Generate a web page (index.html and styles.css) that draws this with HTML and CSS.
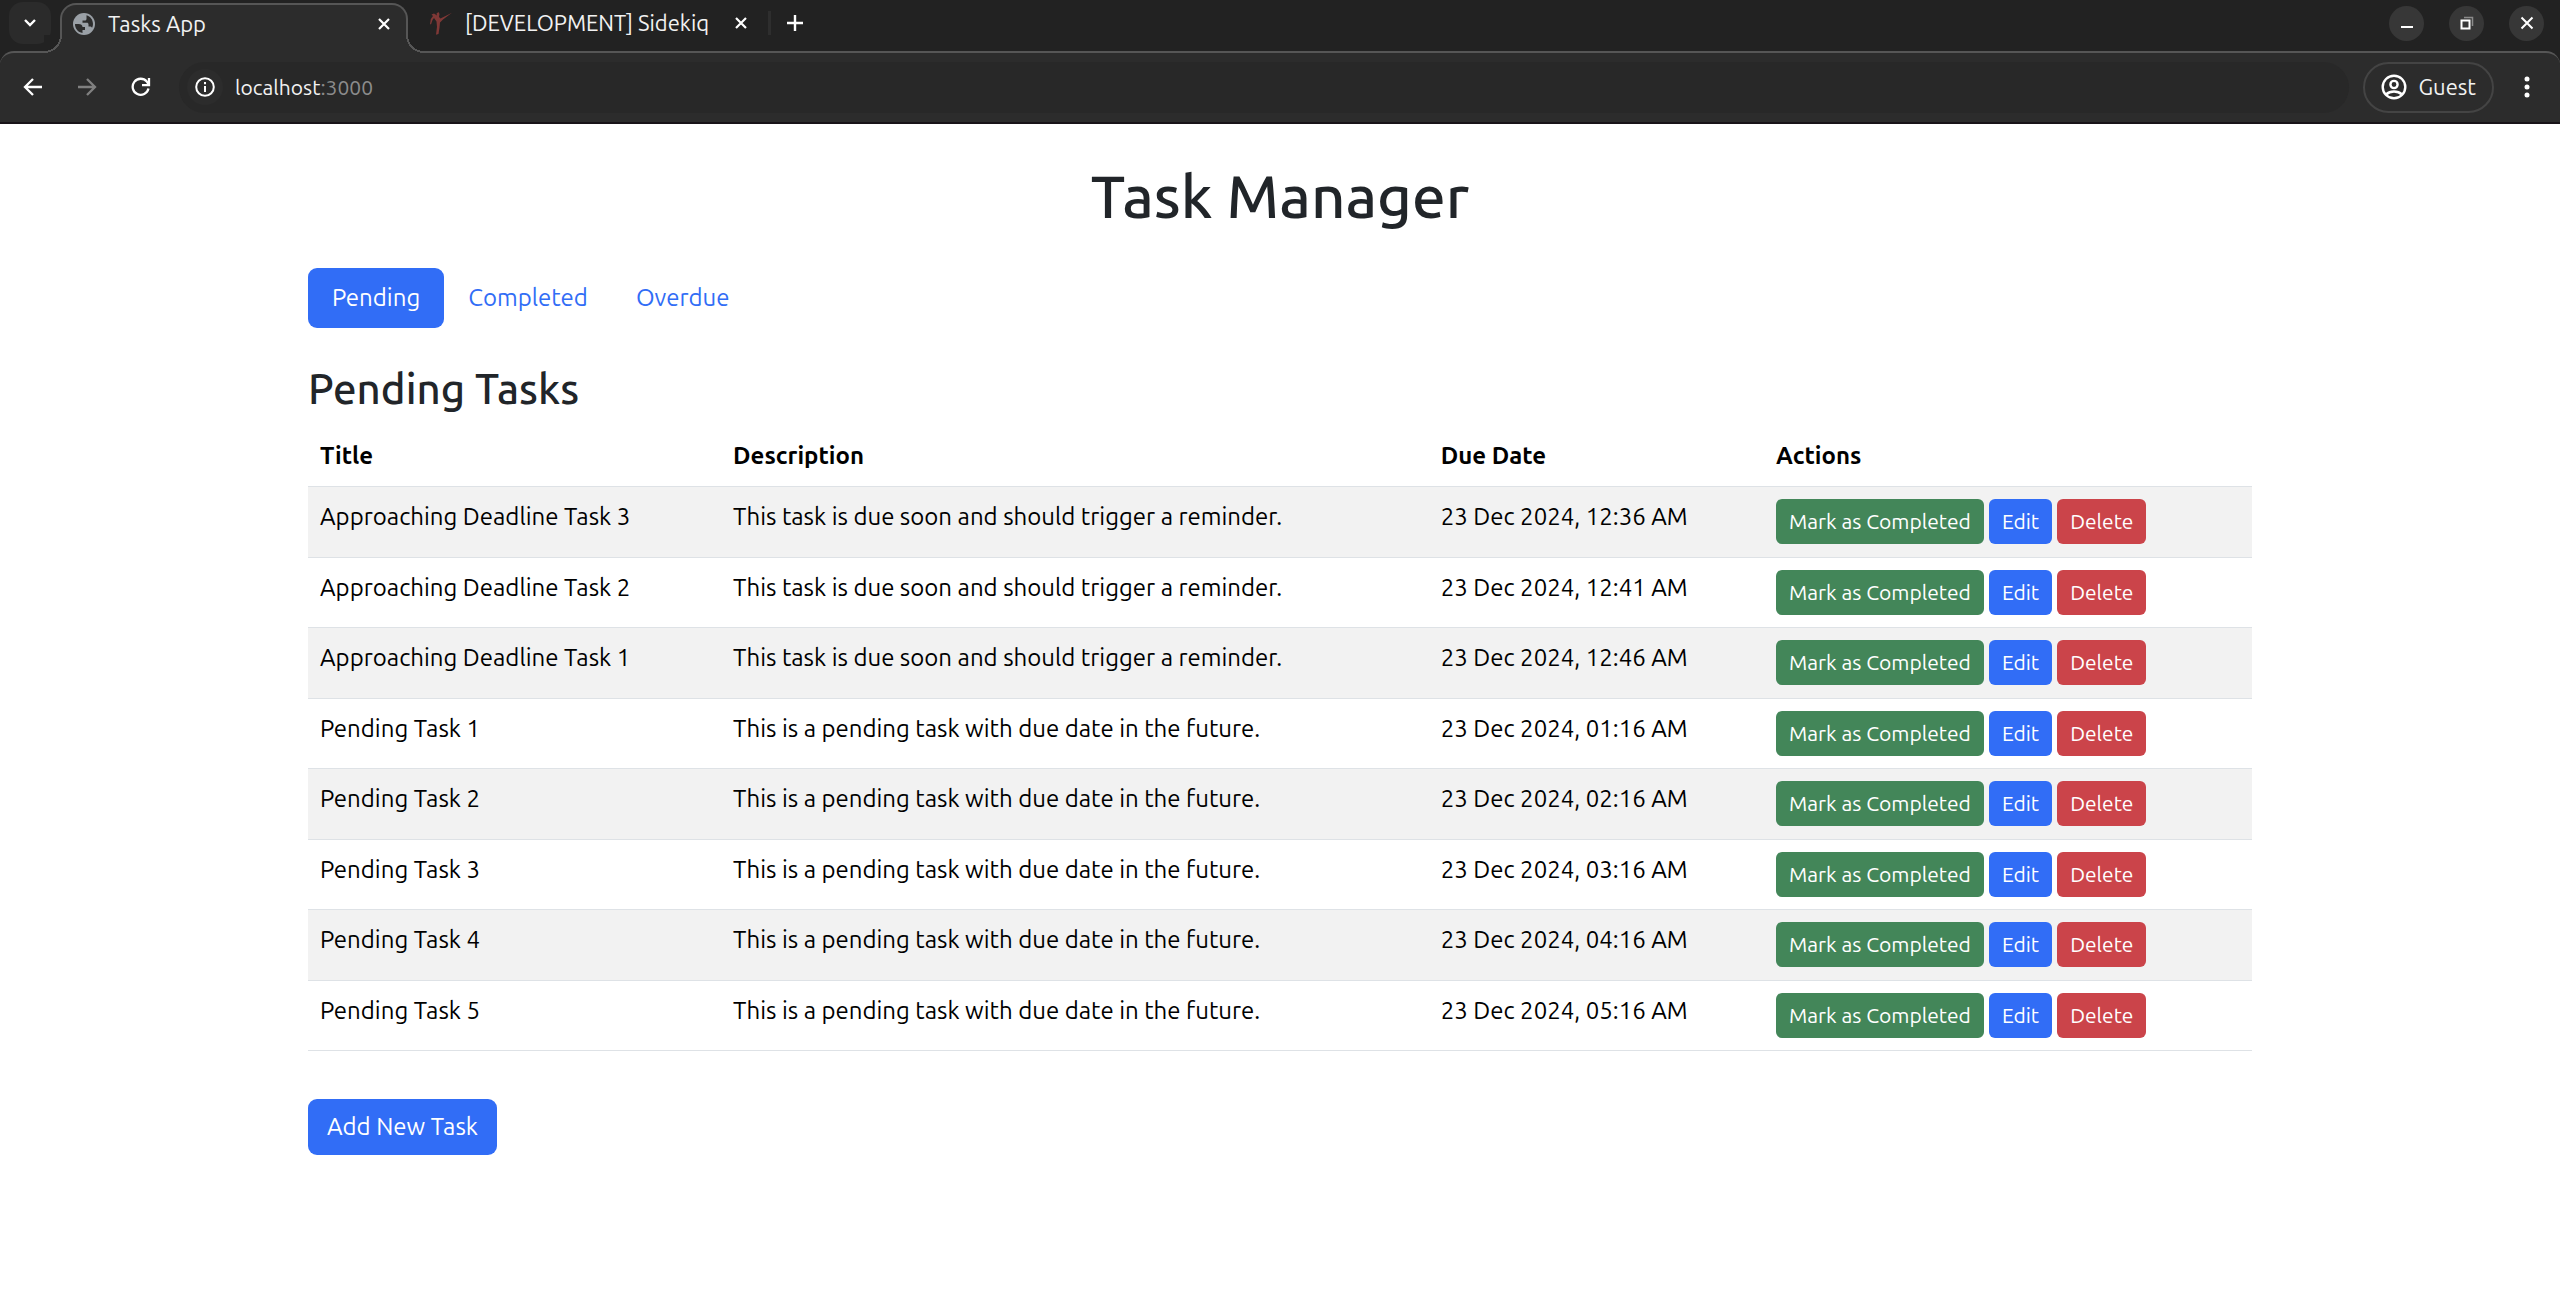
FILE: index.html
```html
<!DOCTYPE html>
<html lang="en">
<head>
<meta charset="utf-8">
<meta name="viewport" content="width=device-width, initial-scale=1">
<title>Tasks App</title>
<link rel="stylesheet" href="styles.css">
</head>
<body>
<header class="browser">
  <div class="tab-strip">
    <button class="tab-search" type="button" aria-label="Search tabs">
      <svg width="16" height="10" viewBox="0 0 16 10"><path d="M3 2l5 5 5-5" fill="none" stroke="#fff" stroke-width="2.4"/></svg>
    </button>
    <div class="tab tab-active">
      <svg class="favicon" width="22" height="22" viewBox="0 0 22 22"><circle cx="11" cy="11" r="11" fill="#9aa0a6"/><path d="M2 11h3.500c2.500 0 4 1 4 3h2.500v3H9.500v2.900C5.200 19.500 1.900 15.700 2 11zM13.500 2.300C17.300 3.300 20 6.800 20 11c0 1.500-.3 2.600-.9 3.700-.6-.7-1.300-1.200-2.300-1.200h-1.300v-2.300c0-.8-.7-1.500-1.500-1.500H9.500V7.500H12c.8 0 1.500-.7 1.500-1.500z" fill="#2c2c2c"/></svg>
      <span class="tab-title">Tasks App</span>
      <button class="icon-button" type="button" aria-label="Close tab">
        <svg width="14" height="14" viewBox="0 0 14 14"><path d="M2 2l10 10M12 2L2 12" stroke="#fff" stroke-width="2.2"/></svg>
      </button>
    </div>
    <div class="tab">
      <svg class="favicon" width="22" height="24" viewBox="0 0 22 24"><path d="M1.500 3.500L4 2.500l3 2-.5-2L8.500 1l1 2-.5 3 1.500 1.500L22 1.800 13 8.500l-3 3-.5 5-1 6.500-2.500.8 1-8-.5-5.300L4 7 2.500 9 1 13.500 0 13l.8-5L3 5z" fill="#7f3836"/></svg>
      <span class="tab-title">[DEVELOPMENT] Sidekiq</span>
      <button class="icon-button" type="button" aria-label="Close tab">
        <svg width="14" height="14" viewBox="0 0 14 14"><path d="M2 2l10 10M12 2L2 12" stroke="#fff" stroke-width="2.2"/></svg>
      </button>
    </div>
    <span class="tab-divider"></span>
    <button class="icon-button" type="button" aria-label="New tab">
      <svg width="16" height="16" viewBox="0 0 16 16"><path d="M8 0v16M0 8h16" stroke="#fff" stroke-width="2.4"/></svg>
    </button>
    <div class="window-controls">
      <button type="button" aria-label="Minimize"><svg width="14" height="14" viewBox="0 0 14 14"><path d="M1 11h12" stroke="#fff" stroke-width="2"/></svg></button>
      <button type="button" aria-label="Restore"><svg width="14" height="14" viewBox="0 0 14 14"><path d="M4 1.500h8.500V10" fill="none" stroke="#8a8a8a" stroke-width="1.500"/><rect x="1.500" y="4.500" width="8" height="8" fill="none" stroke="#fff" stroke-width="2"/></svg></button>
      <button type="button" aria-label="Close"><svg width="14" height="14" viewBox="0 0 14 14"><path d="M1.500 1.500l11 11M12.500 1.500l-11 11" stroke="#fff" stroke-width="2"/></svg></button>
    </div>
  </div>
  <div class="toolbar">
    <button class="icon-button" type="button" aria-label="Back">
      <svg width="20" height="20" viewBox="0 0 20 20"><path d="M10 2L2 10l8 8M2 10h17" fill="none" stroke="#fff" stroke-width="2.300"/></svg>
    </button>
    <button class="icon-button" type="button" aria-label="Forward" disabled>
      <svg width="20" height="20" viewBox="0 0 20 20"><path d="M10 2l8 8-8 8M18 10H1" fill="none" stroke="#808080" stroke-width="2.300"/></svg>
    </button>
    <button class="icon-button" type="button" aria-label="Reload">
      <svg width="20" height="20" viewBox="0 0 20 20"><path d="M17.500 11.500A8 8 0 1 1 15.800 4.600L17.500 7" fill="none" stroke="#fff" stroke-width="2.300"/><path d="M18 1v7.200h-7" fill="none" stroke="#fff" stroke-width="2.300"/></svg>
    </button>
    <div class="address-bar">
      <button class="site-info" type="button" aria-label="Site information">
        <svg width="20" height="20" viewBox="0 0 20 20"><circle cx="10" cy="10" r="8.800" fill="none" stroke="#fff" stroke-width="2"/><path d="M10 9v6M10 5v2.200" stroke="#fff" stroke-width="2"/></svg>
      </button>
      <span class="url">localhost<span class="url-port">:3000</span></span>
    </div>
    <button class="profile" type="button">
      <svg width="26" height="26" viewBox="0 0 26 26" fill="none" stroke="#fff" stroke-width="2.400"><circle cx="13" cy="13" r="11.300"/><circle cx="13" cy="10.500" r="3.600"/><path d="M5 20.500c2.200-2 5-3 8-3s5.800 1 8 3"/></svg>
      Guest
    </button>
    <button class="icon-button" type="button" aria-label="Menu">
      <svg width="6" height="22" viewBox="0 0 6 22" fill="#fff"><circle cx="3" cy="3" r="2.500"/><circle cx="3" cy="11" r="2.500"/><circle cx="3" cy="19" r="2.500"/></svg>
    </button>
  </div>
</header>
<main class="container">
  <h1>Task Manager</h1>
  <nav class="pills">
    <a class="pill pill-active" href="#pending">Pending</a>
    <a class="pill" href="#completed">Completed</a>
    <a class="pill" href="#overdue">Overdue</a>
  </nav>
  <h2 id="pending">Pending Tasks</h2>
  <table class="tasks">
    <colgroup><col class="col-title"><col class="col-description"><col class="col-due"><col class="col-actions"></colgroup>
    <thead>
      <tr><th scope="col">Title</th><th scope="col">Description</th><th scope="col">Due Date</th><th scope="col">Actions</th></tr>
    </thead>
    <tbody>
      <tr><td>Approaching Deadline Task 3</td><td>This task is due soon and should trigger a reminder.</td><td>23 Dec 2024, 12:36 AM</td><td><div class="actions"><button class="btn btn-sm btn-success" type="button">Mark as Completed</button><a class="btn btn-sm" href="#edit">Edit</a><button class="btn btn-sm btn-danger" type="button">Delete</button></div></td></tr>
      <tr><td>Approaching Deadline Task 2</td><td>This task is due soon and should trigger a reminder.</td><td>23 Dec 2024, 12:41 AM</td><td><div class="actions"><button class="btn btn-sm btn-success" type="button">Mark as Completed</button><a class="btn btn-sm" href="#edit">Edit</a><button class="btn btn-sm btn-danger" type="button">Delete</button></div></td></tr>
      <tr><td>Approaching Deadline Task 1</td><td>This task is due soon and should trigger a reminder.</td><td>23 Dec 2024, 12:46 AM</td><td><div class="actions"><button class="btn btn-sm btn-success" type="button">Mark as Completed</button><a class="btn btn-sm" href="#edit">Edit</a><button class="btn btn-sm btn-danger" type="button">Delete</button></div></td></tr>
      <tr><td>Pending Task 1</td><td>This is a pending task with due date in the future.</td><td>23 Dec 2024, 01:16 AM</td><td><div class="actions"><button class="btn btn-sm btn-success" type="button">Mark as Completed</button><a class="btn btn-sm" href="#edit">Edit</a><button class="btn btn-sm btn-danger" type="button">Delete</button></div></td></tr>
      <tr><td>Pending Task 2</td><td>This is a pending task with due date in the future.</td><td>23 Dec 2024, 02:16 AM</td><td><div class="actions"><button class="btn btn-sm btn-success" type="button">Mark as Completed</button><a class="btn btn-sm" href="#edit">Edit</a><button class="btn btn-sm btn-danger" type="button">Delete</button></div></td></tr>
      <tr><td>Pending Task 3</td><td>This is a pending task with due date in the future.</td><td>23 Dec 2024, 03:16 AM</td><td><div class="actions"><button class="btn btn-sm btn-success" type="button">Mark as Completed</button><a class="btn btn-sm" href="#edit">Edit</a><button class="btn btn-sm btn-danger" type="button">Delete</button></div></td></tr>
      <tr><td>Pending Task 4</td><td>This is a pending task with due date in the future.</td><td>23 Dec 2024, 04:16 AM</td><td><div class="actions"><button class="btn btn-sm btn-success" type="button">Mark as Completed</button><a class="btn btn-sm" href="#edit">Edit</a><button class="btn btn-sm btn-danger" type="button">Delete</button></div></td></tr>
      <tr><td>Pending Task 5</td><td>This is a pending task with due date in the future.</td><td>23 Dec 2024, 05:16 AM</td><td><div class="actions"><button class="btn btn-sm btn-success" type="button">Mark as Completed</button><a class="btn btn-sm" href="#edit">Edit</a><button class="btn btn-sm btn-danger" type="button">Delete</button></div></td></tr>
    </tbody>
  </table>
  <a class="btn" href="#new">Add New Task</a>
</main>
</body>
</html>
```
FILE: styles.css
```css
:root {
  --strip: #222222;
  --toolbar: #2c2c2c;
  --outline: #565656;
  --primary: #316df6;
}

* { box-sizing: border-box; }

body {
  margin: 0;
  background: #fff;
  color: #212529;
  font: 400 24px/36px Ubuntu, "Noto Sans", sans-serif;
}

button { font: inherit; color: inherit; }
svg { display: block; flex: none; }

/* Browser window */
.browser {
  background: var(--strip);
  color: #f2f2f2;
  font-size: 22px;
  line-height: 32px;
  border-bottom: 2px solid #191419;
}

.tab-strip {
  display: flex;
  align-items: center;
  height: 51px;
  padding: 0 16px 5px 9px;
}

.tab-search {
  display: grid;
  place-items: center;
  width: 42px;
  height: 42px;
  border: 0;
  border-radius: 14px;
  background: #2b2b2b;
}

.tab {
  display: flex;
  align-items: center;
  gap: 13px;
  padding-left: 22px;
}

.tab-title { flex: 1; white-space: nowrap; }

.tab-active {
  position: relative;
  align-self: flex-start;
  width: 348px;
  height: 50px;
  margin: 3px 0 0 9px;
  padding: 0 15px 10px 11px;
  background: var(--toolbar);
  border: 2px solid var(--outline);
  border-bottom: 0;
  border-radius: 16px 16px 0 0;
}

/* Concave feet that join the active tab to the toolbar */
.tab-active::before,
.tab-active::after {
  content: "";
  position: absolute;
  bottom: 0;
  width: 18px;
  height: 18px;
}
.tab-active::before {
  right: 100%;
  background: radial-gradient(circle at 0 0, var(--strip) 16px, var(--outline) 16px 18px, var(--toolbar) 18px);
}
.tab-active::after {
  left: 100%;
  background: radial-gradient(circle at 100% 0, var(--strip) 16px, var(--outline) 16px 18px, var(--toolbar) 18px);
}

.icon-button {
  display: grid;
  place-items: center;
  padding: 0;
  border: 0;
  background: none;
}

.tab .icon-button { margin-left: 12px; }

.tab-divider {
  width: 3px;
  height: 24px;
  margin: 0 16px 0 20px;
  background: #2e2e2e;
}

.window-controls {
  display: flex;
  gap: 25px;
  margin-left: auto;
}
.window-controls button {
  display: grid;
  place-items: center;
  width: 35px;
  height: 35px;
  padding: 0;
  border: 0;
  border-radius: 50%;
  background: #373737;
}

.toolbar {
  display: flex;
  align-items: center;
  gap: 34px;
  height: 71px;
  padding: 0 30px 1px 23px;
  background: var(--toolbar);
  border-top: 2px solid var(--outline);
  border-radius: 14px 14px 0 0;
}

.address-bar {
  display: flex;
  flex: 1;
  align-items: center;
  gap: 12px;
  height: 51px;
  margin: 0 -20px 0 -6px;
  padding-left: 8px;
  border-radius: 26px;
  background: #282828;
}
.site-info {
  display: grid;
  place-items: center;
  width: 36px;
  height: 36px;
  padding: 0;
  border: 0;
  border-radius: 50%;
  background: var(--toolbar);
}
.url { font-size: 21px; }
.url-port { color: #8c8c8c; }

.profile {
  display: flex;
  align-items: center;
  gap: 12px;
  height: 51px;
  margin-right: -4px;
  padding: 0 16px;
  border: 2px solid #444;
  border-radius: 26px;
  background: none;
}

/* Page */
.container {
  max-width: 1980px;
  margin: 0 auto;
  padding: 36px 18px;
}

h1, h2 { margin: 0; font-weight: 500; }
h1 {
  margin-bottom: 36px;
  font-size: 60px;
  line-height: 72px;
  text-align: center;
}
h2 {
  margin-bottom: 12px;
  font-size: 42px;
  line-height: 50px;
}

.pills {
  display: flex;
  margin-bottom: 36px;
}
.pill {
  padding: 12px 24px;
  border-radius: 9px;
  color: var(--primary);
  text-decoration: none;
}
.pill-active { background: var(--primary); color: #fff; }

.tasks {
  width: 100%;
  margin-bottom: 48px;
  border-collapse: separate;
  border-spacing: 0;
  table-layout: fixed;
  color: #000;
}
.col-title { width: 21.25%; }
.col-description { width: 36.4%; }
.col-due { width: 17.25%; }

th, td {
  padding: 12px;
  border-bottom: 1px solid #dee2e6;
  text-align: left;
  vertical-align: top;
}
th { font-weight: 700; }
tbody tr:nth-child(odd) { height: 71px; background: #f2f2f2; }

.actions { display: flex; gap: 5px; }

.btn {
  display: inline-block;
  padding: 10px 19px;
  border: 0;
  border-radius: 9px;
  background: var(--primary);
  color: #fff;
  text-decoration: none;
  white-space: nowrap;
}
.btn-sm {
  padding: 7px 13px;
  border-radius: 6px;
  font-size: 21px;
  line-height: 31px;
}
.btn-success { background: #438659; }
.btn-danger { background: #cb444a; }
```
